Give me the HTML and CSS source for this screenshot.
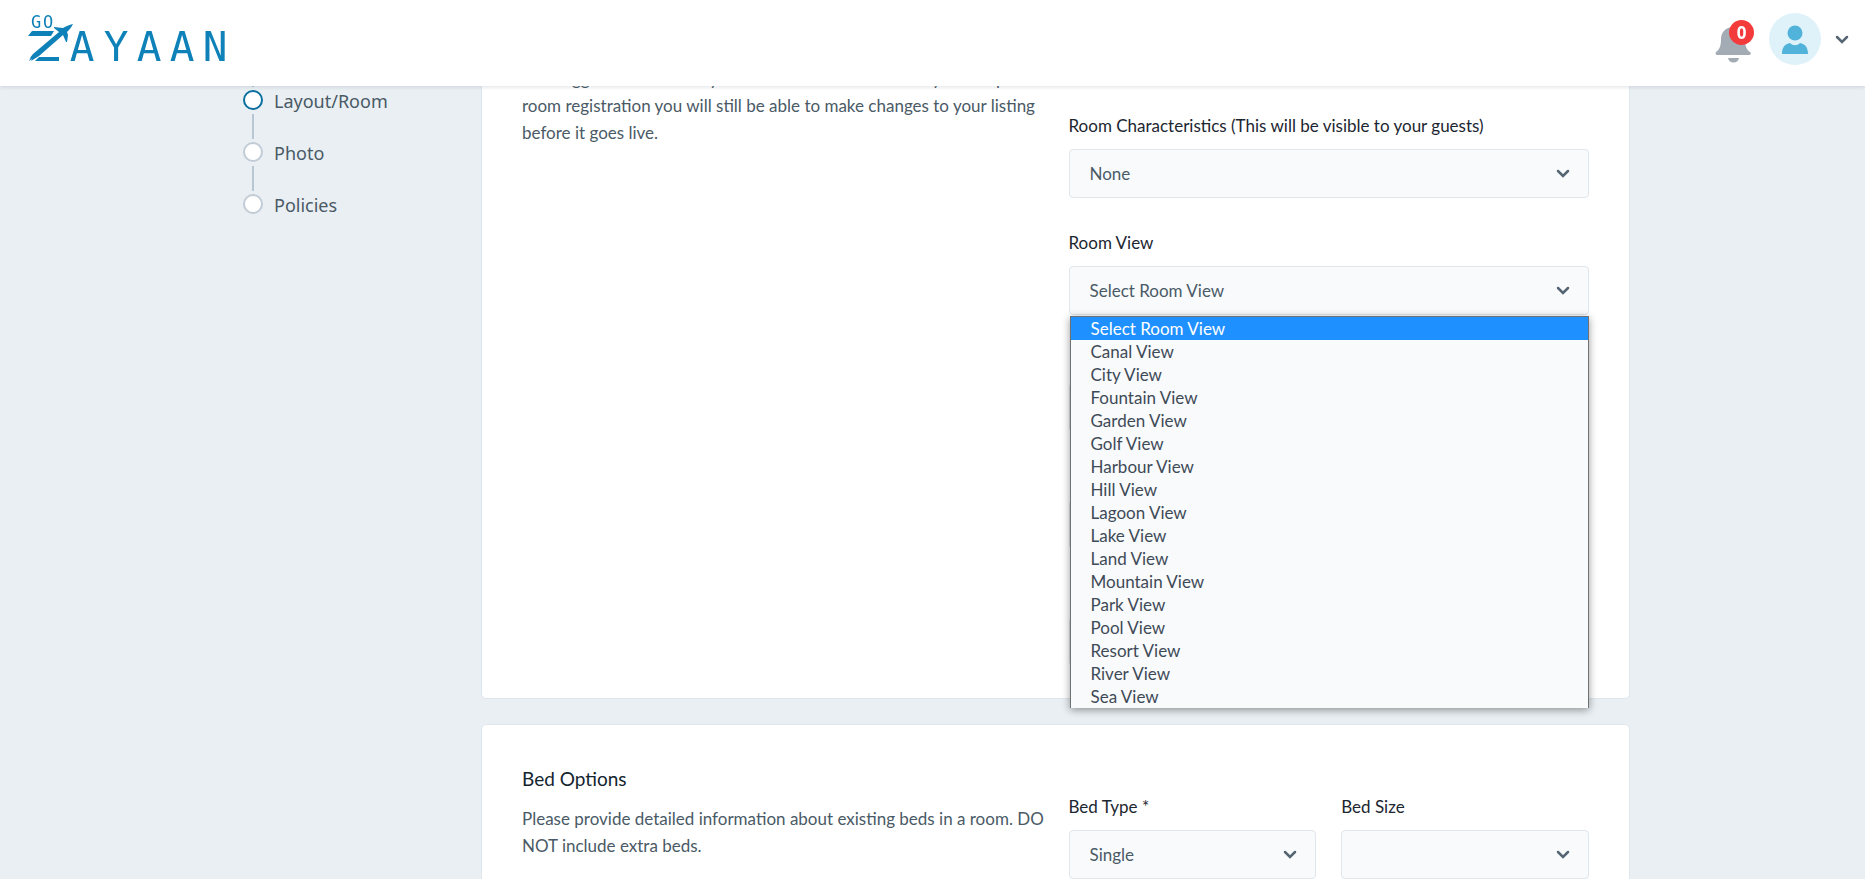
FILE: index.html
```html
<!DOCTYPE html>
<html lang="en">
<head>
<meta charset="utf-8">
<title>GoZayaan – Room setup</title>
<link rel="stylesheet" href="styles.css">
</head>
<body>
<header class="topbar">
  <a class="brand" href="#" aria-label="Go Zayaan home">
    <svg class="brand-logo" viewBox="0 0 204 62" width="204" height="62" aria-hidden="true">
      <text class="brand-go" y="17"><tspan x="8">G</tspan><tspan x="20">O</tspan></text>
      <path d="M4 20h22l-3 5H0zM11 46h20v4H7z"/>
      <path d="M45 13c-2 4-4 6-6 8l1 3-1 7h-1l-3-7L11 45l-8 5 1-2-3 2 2-4-2 2 4-5L31 21l-5-4v-1l9 1c3-2 6-3 10-4z"/>
      <text class="brand-name" y="50"><tspan x="54">A</tspan><tspan x="88">Y</tspan><tspan x="121">A</tspan><tspan x="154">A</tspan><tspan x="187">N</tspan></text>
    </svg>
  </a>
  <div class="account">
    <button class="bell" type="button" aria-label="Notifications">
      <svg viewBox="0 0 36 37" width="36" height="37" aria-hidden="true">
        <path d="M18 0c7 0 12 5 12 12 0 8 2 11 5 13 2 2 0 3-2 3H3c-2 0-3-1-2-3 3-2 5-5 5-13C6 5 11 0 18 0zM13 31h11c-1 6-10 6-11 0z"/>
      </svg>
      <span class="badge">0</span>
    </button>
    <button class="profile" type="button" aria-label="Account menu">
      <span class="avatar">
        <svg viewBox="0 0 28 30" width="28" height="30" aria-hidden="true"><circle cx="14" cy="9" r="7.5"/><path d="M1 30c0-7 3-10 8-11 3 3 7 3 10 0 5 1 8 4 8 11z"/></svg>
      </span>
      <svg class="chevron" viewBox="0 0 14 9" width="14" height="9" aria-hidden="true"><path d="m2 2 5 5 5-5"/></svg>
    </button>
  </div>
</header>
<main class="page">
  <nav class="steps" aria-label="Setup steps">
    <ol>
      <li class="step step-current"><a href="#">Layout/Room</a></li>
      <li class="step"><a href="#">Photo</a></li>
      <li class="step"><a href="#">Policies</a></li>
    </ol>
  </nav>
  <div class="panels">
    <section class="card card-room">
      <div class="card-text">
        <p>Our suggested names may be edited at this time. Once you complete room registration you will still be able to make changes to your listing before it goes live.</p>
      </div>
      <div class="fields">
        <div class="field">
          <label for="characteristics">Room Characteristics (This will be visible to your guests)</label>
          <select id="characteristics"><option>None</option></select>
        </div>
        <div class="field field-open">
          <label for="view">Room View</label>
          <select id="view"><option>Select Room View</option></select>
          <ul class="menu" role="listbox" aria-label="Room View">
            <li class="menu-active" role="option" aria-selected="true">Select Room View</li>
            <li role="option">Canal View</li>
            <li role="option">City View</li>
            <li role="option">Fountain View</li>
            <li role="option">Garden View</li>
            <li role="option">Golf View</li>
            <li role="option">Harbour View</li>
            <li role="option">Hill View</li>
            <li role="option">Lagoon View</li>
            <li role="option">Lake View</li>
            <li role="option">Land View</li>
            <li role="option">Mountain View</li>
            <li role="option">Park View</li>
            <li role="option">Pool View</li>
            <li role="option">Resort View</li>
            <li role="option">River View</li>
            <li role="option">Sea View</li>
          </ul>
        </div>
        <div class="field"><select aria-label="Custom name"><option></option></select></div>
        <div class="field"><select aria-label="Smoking policy"><option></option></select></div>
        <div class="field"><select aria-label="Room count"><option></option></select></div>
      </div>
    </section>
    <section class="card">
      <div class="card-text">
        <h2>Bed Options</h2>
        <p>Please provide detailed information about existing beds in a room. DO NOT include extra beds.</p>
      </div>
      <div class="fields fields-pair">
        <div class="field">
          <label for="bed-type">Bed Type *</label>
          <select id="bed-type"><option>Single</option></select>
        </div>
        <div class="field">
          <label for="bed-size">Bed Size</label>
          <select id="bed-size"><option></option></select>
        </div>
      </div>
    </section>
  </div>
</main>
</body>
</html>
```
FILE: styles.css
```css
*, *::before, *::after { box-sizing: border-box; }
html { overflow: hidden; }
body {
  margin: 0;
  background: #e9eff3;
  color: #4a5a66;
  font-family: Lato, "Noto Sans", sans-serif;
  font-size: 17px;
}
a { color: inherit; text-decoration: none; }
button { border: 0; padding: 0; background: none; font: inherit; }

.topbar {
  position: fixed;
  inset: 0 0 auto;
  z-index: 5;
  display: flex;
  align-items: center;
  justify-content: space-between;
  height: 86px;
  padding: 0 16px 8px 28px;
  background: #fff;
  box-shadow: 0 1px 4px rgba(40, 60, 80, .15);
}
.brand { margin-top: 6px; }
.brand-logo { display: block; fill: #0f81b9; text-anchor: middle; }
.brand-go { font: 17px "DejaVu Sans Mono", monospace; }
.brand-name { font: 41px "DejaVu Sans Mono", monospace; }
.account { display: flex; align-items: center; gap: 18px; }
.bell { position: relative; margin-top: 12px; fill: #a3abb4; }
.bell svg { display: block; }
.badge {
  position: absolute;
  top: -7px;
  right: -3px;
  width: 25px;
  border-radius: 50%;
  background: #f43b3b;
  color: #fff;
  font-family: "Noto Sans", sans-serif;
  font-size: 17px;
  font-weight: 700;
  line-height: 25px;
}
.profile { display: flex; align-items: center; gap: 14px; }
.avatar {
  display: grid;
  place-items: center;
  width: 52px;
  height: 52px;
  border-radius: 50%;
  background: #dff2f9;
  fill: #51b3d9;
}
.chevron { fill: none; stroke: #566573; stroke-width: 2.5; stroke-linecap: round; }

.page {
  display: grid;
  grid-template-columns: 238px minmax(0, 1149px);
  justify-content: center;
  padding-left: 8px;
}
.steps ol { margin: 0; padding: 62px 0 0; list-style: none; }
.step {
  display: grid;
  grid-template-columns: 20px 1fr;
  grid-template-rows: 25px 20px;
  gap: 3px 11px;
  margin-bottom: 4px;
  font-family: "Noto Sans", sans-serif;
  font-size: 18px;
  line-height: 22px;
}
.step::before { content: ""; grid-column: 1; justify-self: center; width: 2px; background: #b9c7d4; }
.step::after { content: ""; grid-area: 2 / 1; border: 2px solid #c2ccd6; border-radius: 50%; background: #fff; }
.step a { grid-area: 2 / 2; }
.step-current::after { border-color: #0b6f9f; }

.panels { display: grid; gap: 25px; }
.card {
  display: grid;
  grid-template-columns: 1fr 1fr;
  padding: 40px;
  border: 1px solid #dfe7ee;
  border-radius: 5px;
  background: #fff;
}
.card-room { padding-top: 64px; padding-bottom: 32px; }
.card h2 { margin: 0 0 13px; color: #14242f; font-size: 19px; font-weight: 400; line-height: 27px; }
.card p { margin: 0; line-height: 27px; }
.fields { display: grid; align-content: start; gap: 32px; padding: 48px 0 0 13px; }
.fields-pair { grid-template-columns: 1fr 1fr; gap: 25px; padding-top: 29px; }
.field { display: grid; align-content: end; gap: 10px; min-height: 85px; }
.field label { color: #1c2630; line-height: 26px; }
.field select {
  appearance: none;
  width: 100%;
  height: 49px;
  padding: 0 20px;
  border: 1px solid #dfe6ec;
  border-radius: 4px;
  background: #f8fafc url("data:image/svg+xml,%3Csvg xmlns='http://www.w3.org/2000/svg' width='14' height='9'%3E%3Cpath d='m2 2 5 5 5-5' fill='none' stroke='%23566573' stroke-width='2.5' stroke-linecap='round'/%3E%3C/svg%3E") no-repeat right 18px center;
  color: #4a5a66;
  font: inherit;
}
.field-open { position: relative; }
.menu {
  position: absolute;
  inset: 100% 0 auto 1px;
  z-index: 2;
  margin: 1px 0 0;
  padding: 0;
  border: 1px solid #6f7275;
  border-bottom: 0;
  background: #f8fafc;
  box-shadow: 0 2px 8px rgba(0, 0, 0, .4);
  color: #3f4a57;
  line-height: 23px;
  list-style: none;
}
.menu li { padding: 0 20px; }
.menu-active { background: #1e90ff; color: #fff; }
```
